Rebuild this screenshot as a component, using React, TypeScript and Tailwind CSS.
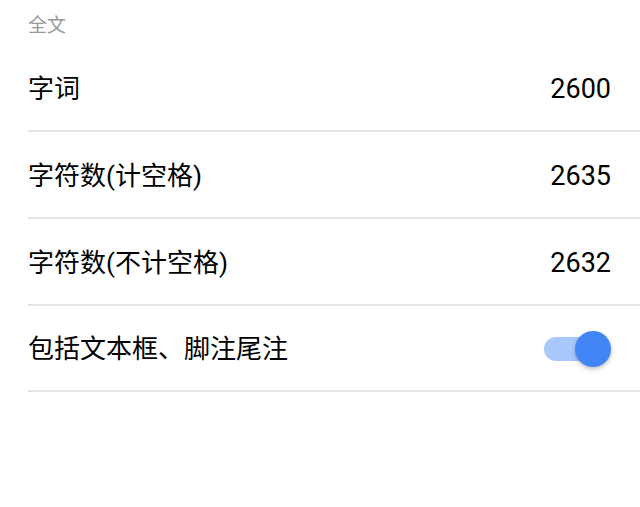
import React from "react";

const rows = [
  { label: "字词", value: "2600" },
  { label: "字符数(计空格)", value: "2635" },
  { label: "字符数(不计空格)", value: "2632" },
];

const font = { fontFamily: '"Roboto", "Noto Sans CJK SC", sans-serif' };

export default function App() {
  return (
    <div className="w-[640px] h-[507px] bg-white pl-[28px]" style={font}>
      <div className="h-[45px] flex items-center pt-[8px] text-[19px] text-[#999]">全文</div>
      {rows.map((r) => (
        <div key={r.label} className="h-[87px] flex items-center justify-between pt-[4px] pr-[29px] border-b-2 border-[#e4e4e4]">
          <span className="text-[26px] text-black">{r.label}</span>
          <span className="text-[27px] text-black">{r.value}</span>
        </div>
      ))}
      <div className="h-[86px] flex items-center justify-between pt-[2px] pr-[29px] border-b-2 border-[#e4e4e4]">
        <span className="text-[26px] text-black">包括文本框、脚注尾注</span>
        <div className="relative w-[68px] h-[36px] flex items-center">
          <div className="ml-[1px] w-[54px] h-[24px] rounded-full bg-[#a9c8fb]" />
          <div className="absolute right-0 top-0 w-[36px] h-[36px] rounded-full bg-[#4285f4] shadow-[0_2px_4px_rgba(0,0,0,0.25)]" />
        </div>
      </div>
    </div>
  );
}
